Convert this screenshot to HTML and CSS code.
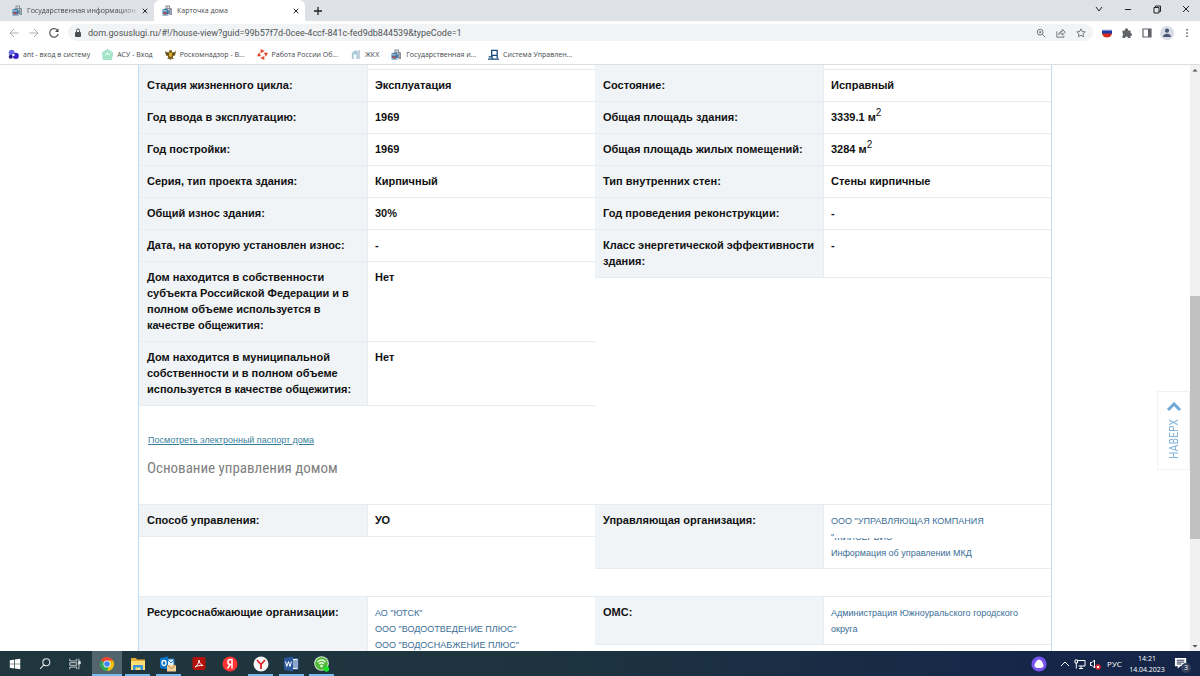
FILE: index.html
```
<!DOCTYPE html>
<html lang="ru">
<head>
<meta charset="utf-8">
<title>Карточка дома</title>
<link rel="stylesheet" href="styles.css">
</head>
<body>
<svg class="defs" aria-hidden="true">
  <symbol id="gis" viewBox="0 0 22 22">
    <path d="M7 1h9v17H7z" fill="#8a9299"/><path d="M9 3h2v3H9zM12 3h2v3h-2zM12 8h2v3h-2z" fill="#e8f1f8"/>
    <path d="M15 5l5 2v13h-5z" fill="#7f8b95"/><path d="M17.500 8v10" stroke="#cfe2f2"/>
    <path d="M1 9l6-2 6 3v8H1z" fill="#3777a8"/><path d="M3 10h2v3H3zM7 10h2v3H7z" fill="#fff"/>
    <path d="M3 15h5l2 2v2H3z" fill="#c9483c"/><path d="M1 19h12v2H1z" fill="#3777a8"/>
  </symbol>
</svg>

<header class="browser">
  <div class="tabs">
    <div class="tab">
      <svg class="icon"><use href="#gis"/></svg><span class="tab-title faded">Государственная информацион</span>
      <button class="tab-close" aria-label="Закрыть вкладку"><svg viewBox="0 0 8 8"><path d="M1 1l6 6M7 1L1 7"/></svg></button>
    </div>
    <div class="tab active">
      <svg class="icon"><use href="#gis"/></svg><span class="tab-title">Карточка дома</span>
      <button class="tab-close" aria-label="Закрыть вкладку"><svg viewBox="0 0 8 8"><path d="M1 1l6 6M7 1L1 7"/></svg></button>
    </div>
    <button class="new-tab" aria-label="Новая вкладка"><svg viewBox="0 0 8 8"><path d="M4 0v8M0 4h8"/></svg></button>
    <div class="window-buttons">
      <button aria-label="Список вкладок"><svg viewBox="0 0 10 10"><path d="M2 3l3 4 3-4"/></svg></button>
      <button aria-label="Свернуть"><svg viewBox="0 0 10 10"><path d="M2 5.500h6"/></svg></button>
      <button aria-label="Восстановить"><svg viewBox="0 0 10 10"><path d="M2 3.500h5V9H2zM3.500 3.500V2H8.500V7.500H7"/></svg></button>
      <button aria-label="Закрыть"><svg viewBox="0 0 10 10"><path d="M2 2l6 6M8 2L2 8"/></svg></button>
    </div>
  </div>

  <div class="toolbar">
    <div class="nav-buttons">
      <button class="dim" aria-label="Назад"><svg viewBox="0 0 12 12"><path d="M10.500 6H2M6 2L2 6l4 4"/></svg></button>
      <button class="dim" aria-label="Вперёд"><svg viewBox="0 0 12 12"><path d="M1.500 6H10M6 2l4 4-4 4"/></svg></button>
      <button aria-label="Обновить"><svg viewBox="0 0 12 12"><path d="M9.800 3.800A4.300 4.300 0 1 0 10.200 7" stroke-width="1.300"/><path d="M10.500 1.500V5H7z" fill="#444" stroke="none"/></svg></button>
    </div>
    <div class="omnibox">
      <svg class="lock" viewBox="0 0 8 10"><rect x="1" y="4" width="6" height="5" rx="1" fill="#4a4d51"/><path d="M2.500 4V2.500a1.500 1.500 0 0 1 3 0V4" fill="none" stroke="#4a4d51"/></svg>
      <input type="text" aria-label="Адрес" value="dom.gosuslugi.ru/#!/house-view?guid=99b57f7d-0cee-4ccf-841c-fed9db844539&amp;typeCode=1">
      <button aria-label="Масштаб"><svg viewBox="0 0 12 12"><circle cx="5" cy="5" r="3.500"/><path d="M7.500 7.500L11 11M3.500 5h3M5 3.500v3"/></svg></button>
      <button aria-label="Поделиться"><svg viewBox="0 0 12 12"><path d="M1 4v7h8.500V9M3.500 8c0-3 2-4 4-4V1.500l3.500 3.500-3.500 3.500V6c-2 0-3 .5-4 2z"/></svg></button>
      <button aria-label="В закладки"><svg viewBox="0 0 12 12"><path d="M6 1l1.500 3.200 3.500.4-2.600 2.400.7 3.500L6 8.800l-3.100 1.700.7-3.500L1 4.600l3.500-.4z"/></svg></button>
    </div>
    <div class="extensions">
      <button aria-label="Госуслуги"><svg viewBox="0 0 12 12"><path d="M1 2h10v2H1z" fill="#dfe3ee" stroke="none"/><path d="M1 3.500h10V7H1z" fill="#1c38a6" stroke="none"/><path d="M1 6.500h10c-1 3-2.500 4-5 4s-4-1-5-4z" fill="#d52b1e" stroke="none"/></svg></button>
      <button aria-label="Расширения"><svg viewBox="0 0 12 12"><path d="M1.500 3.500H4a1.600 1.600 0 1 1 3 0h2.500V6a1.500 1.500 0 1 1 0 3v2H7a1.500 1.500 0 0 0-3 0H1.500V8.500a1.500 1.500 0 0 0 0-2.500z" fill="#5f6368" stroke="none"/></svg></button>
      <button aria-label="Боковая панель"><svg viewBox="0 0 12 12"><path d="M2 2h8v8H2z" stroke-width="1.200"/><path d="M7 2h3v8H7z" fill="#5f6368" stroke="none"/></svg></button>
      <button class="avatar" aria-label="Профиль"><svg viewBox="0 0 12 12"><circle cx="6" cy="4" r="1.800" fill="#4b5875" stroke="none"/><path d="M2.500 9.500c0-2 2-2.800 3.500-2.800s3.500.8 3.500 2.800z" fill="#4b5875" stroke="none"/></svg></button>
      <button aria-label="Меню"><svg viewBox="0 0 12 12"><path d="M5.300 2h1.500v1.500H5.300zM5.300 5.300h1.500v1.500H5.300zM5.300 8.500h1.500V10H5.300z" fill="#555" stroke="none"/></svg></button>
    </div>
  </div>

  <nav class="bookmarks">
    <a href="#"><svg class="icon" viewBox="0 0 12 12"><circle cx="4" cy="4" r="3.200" fill="#6a6bea"/><circle cx="8.500" cy="7.500" r="3.300" fill="#3a20c8"/><circle cx="3" cy="8.500" r="2.200" fill="#261786"/><circle cx="6" cy="6.500" r="1.300" fill="#fff"/></svg>ant - вход в систему</a>
    <a href="#"><svg class="icon" viewBox="0 0 12 12"><path d="M6 .5L11.500 4 10.500 11.500h-9L.5 4z" fill="#b8ebd5" stroke="#8edbb8"/><path d="M3 5l3-2 3 2v4H3zM5 9V6.500h2V9" fill="#e9fff5" stroke="#6fcda4" stroke-width=".8"/></svg>АСУ - Вход</a>
    <a href="#"><svg class="icon" viewBox="0 0 12 12"><path d="M0 2l2 1.500h2L5 1h2l1 2.500h2L12 2l-1 5-2 .500L8.500 9l1 2H7l-1 1-1-1H2.500l1-2L3 7.500 1 7z" fill="#7d6526"/><path d="M4.500 4h3v3L6 9 4.500 7z" fill="#e3b02d"/><path d="M1 4l3 2M11 4L8 6" stroke="#3a321c"/></svg>Роскомнадзор - В...</a>
    <a href="#"><svg class="icon" viewBox="0 0 12 12"><path d="M4 0l4.500 2.300L4 4.600zM12 4L9.700 8.500 7.500 4zM8 12L3.500 9.700 8 7.500zM0 8l2.300-4.500L4.500 8z" fill="#df4931"/></svg>Работа России Об...</a>
    <a href="#"><svg class="icon" viewBox="0 0 12 12"><path d="M2 4l4-3 3 2v8H7V6H4v5H2z" fill="#a9cbdc"/><path d="M9 1h2v10H9z" fill="#c2cdd3"/></svg>ЖКХ</a>
    <a href="#"><svg class="icon"><use href="#gis"/></svg>Государственная и...</a>
    <a href="#"><svg class="icon" viewBox="0 0 12 12"><path d="M4 9V1.500h6V10M0 11h12M.7 8.500h3.800V11M4 7h6" fill="none" stroke="#174a7c" stroke-width="1.400"/></svg>Система Управлен...</a>
  </nav>
</header>

<main class="viewport">
  <div class="page">
    <div class="card">
      <div class="columns">
        <dl class="fields">
          <div class="row stub"><dt></dt><dd></dd></div>
          <div class="row"><dt>Стадия жизненного цикла:</dt><dd>Эксплуатация</dd></div>
          <div class="row"><dt>Год ввода в эксплуатацию:</dt><dd>1969</dd></div>
          <div class="row"><dt>Год постройки:</dt><dd>1969</dd></div>
          <div class="row"><dt>Серия, тип проекта здания:</dt><dd>Кирпичный</dd></div>
          <div class="row"><dt>Общий износ здания:</dt><dd>30%</dd></div>
          <div class="row"><dt>Дата, на которую установлен износ:</dt><dd>-</dd></div>
          <div class="row"><dt>Дом находится в собственности субъекта Российской Федерации и в полном объеме используется в качестве общежития:</dt><dd>Нет</dd></div>
          <div class="row"><dt>Дом находится в муниципальной собственности и в полном объеме используется в качестве общежития:</dt><dd>Нет</dd></div>
        </dl>
        <dl class="fields">
          <div class="row stub"><dt></dt><dd></dd></div>
          <div class="row"><dt>Состояние:</dt><dd>Исправный</dd></div>
          <div class="row"><dt>Общая площадь здания:</dt><dd>3339.1 м<sup>2</sup></dd></div>
          <div class="row"><dt>Общая площадь жилых помещений:</dt><dd>3284 м<sup>2</sup></dd></div>
          <div class="row"><dt>Тип внутренних стен:</dt><dd>Стены кирпичные</dd></div>
          <div class="row"><dt>Год проведения реконструкции:</dt><dd>-</dd></div>
          <div class="row"><dt>Класс энергетической эффективности здания:</dt><dd>-</dd></div>
        </dl>
      </div>
      <a class="passport" href="#">Посмотреть электронный паспорт дома</a>
      <h2>Основание управления домом</h2>
      <div class="columns topped">
        <dl class="fields">
          <div class="row"><dt>Способ управления:</dt><dd>УО</dd></div>
        </dl>
        <dl class="fields">
          <div class="row"><dt>Управляющая организация:</dt><dd class="links"><a href="#">ООО "УПРАВЛЯЮЩАЯ КОМПАНИЯ<br><span class="covered">"ЖИЛСЕРВИС"</span></a><a href="#">Информация об управлении МКД</a></dd></div>
        </dl>
      </div>
      <div class="columns topped spaced">
        <dl class="fields">
          <div class="row"><dt>Ресурсоснабжающие организации:</dt><dd class="links"><a href="#">АО "ЮТСК"</a><a href="#">ООО "ВОДООТВЕДЕНИЕ ПЛЮС"</a><a href="#">ООО "ВОДОСНАБЖЕНИЕ ПЛЮС"</a></dd></div>
        </dl>
        <dl class="fields">
          <div class="row"><dt>ОМС:</dt><dd class="links"><a href="#">Администрация Южноуральского городского<br>округа</a></dd></div>
        </dl>
      </div>
    </div>
  </div>
  <div class="scrollbar">
    <svg viewBox="0 0 10 10"><path d="M2.500 6.500L5 4l2.500 2.500z" fill="#505050"/></svg>
    <div class="track"><div class="thumb"></div></div>
    <svg viewBox="0 0 10 10"><path d="M2.500 4L5 6.500 7.500 4z" fill="#505050"/></svg>
  </div>
  <button class="to-top"><svg viewBox="0 0 16 10"><path d="M2 8l6-6 6 6" fill="none" stroke="#6fa9d8" stroke-width="3"/></svg><span>НАВЕРХ</span></button>
</main>

<footer class="taskbar">
  <div class="system">
    <button aria-label="Пуск"><svg viewBox="0 0 16 16"><path d="M2 3.700l5-.7v4.600H2zM7.800 2.900L14 2v5.600H7.800zM2 8.400h5V13l-5-.7zM7.800 8.400H14V14l-6.200-.9z" fill="#fff"/></svg></button>
    <button aria-label="Поиск"><svg viewBox="0 0 16 16" fill="none" stroke="#e4e8ea" stroke-width="1.200"><circle cx="9.500" cy="6" r="4"/><path d="M6.700 9L2.500 13.500"/></svg></button>
    <button aria-label="Представление задач"><svg viewBox="0 0 16 16" fill="none" stroke="#d6dcdf"><path d="M2 2v2.500h8V2M2 14v-2.500h8V14M2 6.500h8v3H2zM12.500 2v12"/><path d="M12 5h2v3h-2z" fill="#d6dcdf"/></svg></button>
  </div>
  <div class="apps">
    <button class="current" aria-label="Chrome"><svg viewBox="0 0 16 16"><circle cx="8" cy="8" r="7" fill="#34a853"/><path d="M1.900 4.500a7 7 0 0 1 12.200 0L8 8z" fill="#ea4335"/><path d="M14.100 4.500A7 7 0 0 1 8 15l3-6z" fill="#fbbc05"/><path d="M8 4.500h6.100L11 9z" fill="#fbbc05"/><path d="M1.900 4.500A7 7 0 0 1 8 1l1 4z" fill="#ea4335"/><circle cx="8" cy="8" r="3.600" fill="#fff"/><circle cx="8" cy="8" r="2.800" fill="#4285f4"/></svg></button>
    <button class="open" aria-label="Проводник"><svg viewBox="0 0 16 16"><path d="M1 2h5l1 1.500h8V13H1z" fill="#e5ac35"/><path d="M1 5h14v9H1z" fill="#ffdc75"/><path d="M3 14V9h10v5h-2.500v-2.500h-5V14z" fill="#3a96d8"/></svg></button>
    <button class="open" aria-label="Outlook"><svg viewBox="0 0 16 16"><path d="M7 3h7v8H7z" fill="#e8f3fb" stroke="#1779c4"/><path d="M8 4l3 3 3-3" fill="none" stroke="#1779c4"/><path d="M0 2l8-1.500v13L0 12z" fill="#0872c6"/><ellipse cx="4" cy="7" rx="2" ry="2.500" fill="none" stroke="#fff" stroke-width="1.300"/><path d="M7 9h9v6.500H7z" fill="#f5d19b"/><path d="M7 9l4.500 3.500L16 9" fill="none" stroke="#bd8545"/></svg></button>
    <button aria-label="Acrobat"><svg viewBox="0 0 16 16"><rect x="1.500" y="1" width="13" height="13" rx="2" fill="#b3120c"/><path d="M4 11c2-1 4-4 4-7 0 3 2 5 4 5.500-3-.5-6 .5-8 1.500z" fill="none" stroke="#fff"/></svg></button>
    <button aria-label="Яндекс"><svg viewBox="0 0 16 16"><circle cx="8" cy="8" r="7.500" fill="#f33"/><path d="M10 12.500v-9H8.500C5 3.500 5 8.500 8.500 8.500H10M8 8.500l-2.500 4" fill="none" stroke="#fff" stroke-width="1.500"/></svg></button>
    <button class="open" aria-label="Яндекс Браузер"><svg viewBox="0 0 16 16"><circle cx="8" cy="8" r="7.500" fill="#f5f5f5"/><path d="M4 4l4 4.500L12 4M8 8v5" fill="none" stroke="#d9262b" stroke-width="1.800"/></svg></button>
    <button class="open" aria-label="Word"><svg viewBox="0 0 16 16"><path d="M8 2.500h7v11H8z" fill="#f4f7fc" stroke="#2b579a"/><path d="M9 5h5M9 7h5M9 9h5M9 11h5" stroke="#2b579a"/><path d="M1 2l9-1.500v15L1 14z" fill="#2b579a"/><path d="M2.500 5.500l1.200 5 1.800-5 1.500 5 1.500-5" fill="none" stroke="#fff"/></svg></button>
    <button class="open" aria-label="Мессенджер"><svg viewBox="0 0 16 16"><circle cx="7.500" cy="7.500" r="7.300" fill="#d9ead4"/><circle cx="7.500" cy="7.500" r="6.300" fill="#4fb63a"/><path d="M3.500 6c2.500-2.500 5.500-2.500 8 0M5 8c1.500-1.500 3.500-1.500 5 0" fill="none" stroke="#eaffdd" stroke-width="1.200"/><circle cx="7.500" cy="10" r="1.300" fill="#eaffdd"/><circle cx="12.500" cy="13" r="2.700" fill="#16e228"/></svg></button>
  </div>
  <div class="tray">
    <button class="alice" aria-label="Алиса"><svg viewBox="0 0 16 16"><circle cx="8" cy="8" r="7.600" fill="#7853ee"/><path d="M8 3.500c2 0 4.500 4 4.500 6S10.500 12 8 12s-4.500-.5-4.500-2.500 2.500-6 4.500-6z" fill="#fff"/></svg></button>
    <button aria-label="Скрытые значки"><svg viewBox="0 0 12 12"><path d="M2 8l4-4 4 4"/></svg></button>
    <button aria-label="Сеть"><svg viewBox="0 0 12 12"><path d="M3.500 2.500h7.500V8H4.500M7 8v2.500M5 10.500h4M1 2h2.500v3H1zM2.300 5v5.500"/></svg></button>
    <button aria-label="Звук"><svg viewBox="0 0 12 12"><path d="M1.500 4.500H3L5.500 2v8L3 7.500H1.500z"/><circle cx="9" cy="9" r="2.800" fill="#d92f34" stroke="none"/><path d="M8 8l2 2M10 8l-2 2"/></svg></button>
    <button class="lang">РУС</button>
    <div class="clock"><span>14:21</span><span>14.04.2023</span></div>
    <button class="notes" aria-label="Уведомления"><svg viewBox="0 0 16 16"><path d="M1 2h12v9H6.500L4 13.500V11H1z" fill="#fff"/><path d="M3 4.500h8M3 6.500h8M3 8.500h5" stroke="#1a2c4b"/></svg><span class="badge">3</span></button>
  </div>
</footer>
</body>
</html>
```
FILE: styles.css
```
* { box-sizing: border-box; }
body {
  margin: 0;
  height: 100vh;
  display: flex;
  flex-direction: column;
  overflow: hidden;
  background: #fff;
  font-family: "Liberation Sans", Arial, sans-serif;
}
button {
  padding: 0;
  border: 0;
  background: none;
  font: inherit;
  color: inherit;
  display: flex;
  align-items: center;
  justify-content: center;
}
a { color: #3a6e96; text-decoration: none; }
svg { display: block; }
.defs { display: none; }
.icon { width: 11px; height: 11px; flex: none; }

/* Browser frame */
.browser {
  flex: none;
  border-bottom: 1px solid #dcdfe2;
  font-family: "Open Sans", "Noto Sans", sans-serif;
  font-size: 7px;
  color: #45494d;
}
.browser button svg { fill: none; stroke: #5f6368; }
.tabs { display: flex; height: 21px; background: #dee1e6; }
.tab {
  display: flex;
  align-items: center;
  gap: 4px;
  width: 154px;
  padding: 0 4px 0 12px;
}
.tab.active {
  width: 151px;
  padding-left: 8px;
  background: #fff;
  border-radius: 6px 6px 0 0;
}
.tab-title { flex: 1; white-space: nowrap; }
.faded {
  -webkit-mask-image: linear-gradient(90deg, #000 85%, #0004);
  mask-image: linear-gradient(90deg, #000 85%, #0004);
}
.tab-close { width: 10px; height: 10px; }
.tab-close svg { width: 6px; height: 6px; }
.browser .tab-close svg, .browser .new-tab svg { stroke: #222; stroke-width: 1.3; }
.new-tab { width: 26px; }
.new-tab svg { width: 8px; height: 8px; }
.window-buttons { display: flex; margin-left: auto; }
.window-buttons button { width: 29px; padding-bottom: 3px; }
.window-buttons svg { width: 10px; height: 10px; }
.browser .window-buttons svg { stroke: #222; }

.toolbar { display: flex; align-items: center; height: 23px; padding: 0 3px 0 4px; gap: 4px; }
.nav-buttons { display: flex; }
.nav-buttons button { width: 20px; }
.nav-buttons svg { width: 12px; height: 12px; }
.browser .dim svg { stroke: #a9adb1; }
.omnibox {
  flex: 1;
  display: flex;
  align-items: center;
  height: 17px;
  padding: 0 2px 0 6px;
  border-radius: 9px;
  background: #f1f3f4;
}
.lock { width: 8px; height: 10px; }
.omnibox input {
  flex: 1;
  min-width: 0;
  padding: 0 0 0 6px;
  border: 0;
  outline: 0;
  background: none;
  font: 9px Roboto, "Noto Sans", sans-serif;
  color: #505458;
}
.omnibox button { width: 20px; }
.omnibox button svg { width: 10px; height: 10px; }
.extensions { display: flex; }
.extensions button { width: 20px; height: 14px; }
.extensions svg { width: 12px; height: 12px; }
.extensions .avatar svg { border-radius: 50%; background: #d8dce5; width: 14px; height: 14px; }

.bookmarks { display: flex; align-items: center; gap: 12px; height: 20px; padding: 0 8px; }
.bookmarks a { display: flex; align-items: center; gap: 4px; color: #45494d; white-space: nowrap; }

/* House card */
.viewport { position: relative; flex: 1; min-height: 0; display: flex; }
.page { flex: 1; overflow: hidden; }
.card {
  max-width: 914px;
  min-height: 100%;
  margin: 0 auto;
  border: solid #bfdcf2;
  border-width: 0 1px;
  font-size: 11px;
  line-height: 16px;
  color: #111;
}
.columns { display: grid; grid-template-columns: 1fr 1fr; align-items: start; }
.fields { margin: 0; font-weight: bold; }
.row { display: grid; grid-template-columns: 1fr 1fr; border-bottom: 1px solid #e6ecf1; }
.topped .row { border-top: 1px solid #e6ecf1; }
.topped .row dt { padding-bottom: 7px; }
.stub { height: 5px; }
.row dt { padding: 7px 8px 8px; background: #f0f4f7; }
.row dd { margin: 0; padding: 7px 7px 8px; border-left: 1px solid #e6ecf1; }
.row sup { font-size: 10px; line-height: 0; font-weight: normal; }
.row .links { padding-top: 8px; padding-bottom: 7px; font-weight: normal; font-size: 9px; }
.links a { display: block; }
.covered { position: relative; display: inline-block; }
.covered::after {
  content: "";
  position: absolute;
  left: 3px;
  right: 0;
  top: 0;
  height: 9px;
  background: #fff;
}
.passport {
  display: inline-block;
  margin: 26px 0 0 9px;
  font-size: 9px;
  color: #3a7f9a;
  text-decoration: underline;
}
h2 {
  margin: 10px 8px 26px;
  font: 15px/20px "Roboto Condensed", Roboto, sans-serif;
  color: #808080;
}
.spaced { margin-top: 27px; }

.scrollbar { width: 10px; display: flex; flex-direction: column; background: #f1f1f1; }
.scrollbar svg { width: 10px; height: 10px; }
.track { flex: 1; display: flex; flex-direction: column; }
.track::before { content: ""; height: 39%; }
.thumb { height: 43%; background: #c1c1c1; }
.to-top {
  position: absolute;
  right: 10px;
  top: 326px;
  width: 33px;
  height: 79px;
  flex-direction: column;
  gap: 7px;
  border: 1px solid #f0f2f4;
  background: #fff;
  font: 12px/16px "Roboto Condensed", Roboto, sans-serif;
  color: #86b5dc;
}
.to-top svg { width: 16px; height: 10px; }
.to-top span { writing-mode: vertical-rl; transform: rotate(180deg); }

/* Taskbar */
.taskbar {
  flex: none;
  display: flex;
  height: 25px;
  background: linear-gradient(90deg, #20363e, #1d343f 45%, #152749 85%, #152547);
  color: #fff;
  font-family: "Open Sans", "Noto Sans", sans-serif;
  font-size: 7px;
}
.system { display: flex; margin-right: 2px; }
.system button { width: 30px; }
.system svg { width: 14px; height: 14px; }
.apps { display: flex; justify-content: space-between; width: 245px; }
.apps button { width: 30px; }
.apps svg { width: 16px; height: 16px; }
.apps .open { background: linear-gradient(#76b9ed, #76b9ed) bottom / 25px 2px no-repeat; }
.apps .current { background: #53656c; border-bottom: 2px solid #76b9ed; padding-top: 2px; }
.tray { display: flex; align-items: center; margin-left: auto; padding-right: 5px; }
.tray svg { width: 12px; height: 12px; fill: none; stroke: #fff; }
.tray button { width: 15px; height: 25px; }
.tray .alice { width: 17px; margin-right: 10px; }
.tray .alice svg { width: 16px; height: 16px; stroke: none; }
.tray .lang { width: 25px; font-size: 8px; }
.clock { display: flex; flex-direction: column; align-items: center; width: 40px; line-height: 11px; }
.tray .notes { position: relative; width: 28px; }
.tray .notes svg { width: 15px; height: 15px; stroke: none; }
.badge {
  position: absolute;
  right: 4px;
  bottom: 3px;
  width: 10px;
  height: 10px;
  border-radius: 50%;
  background: #34425e;
  line-height: 10px;
}
```
